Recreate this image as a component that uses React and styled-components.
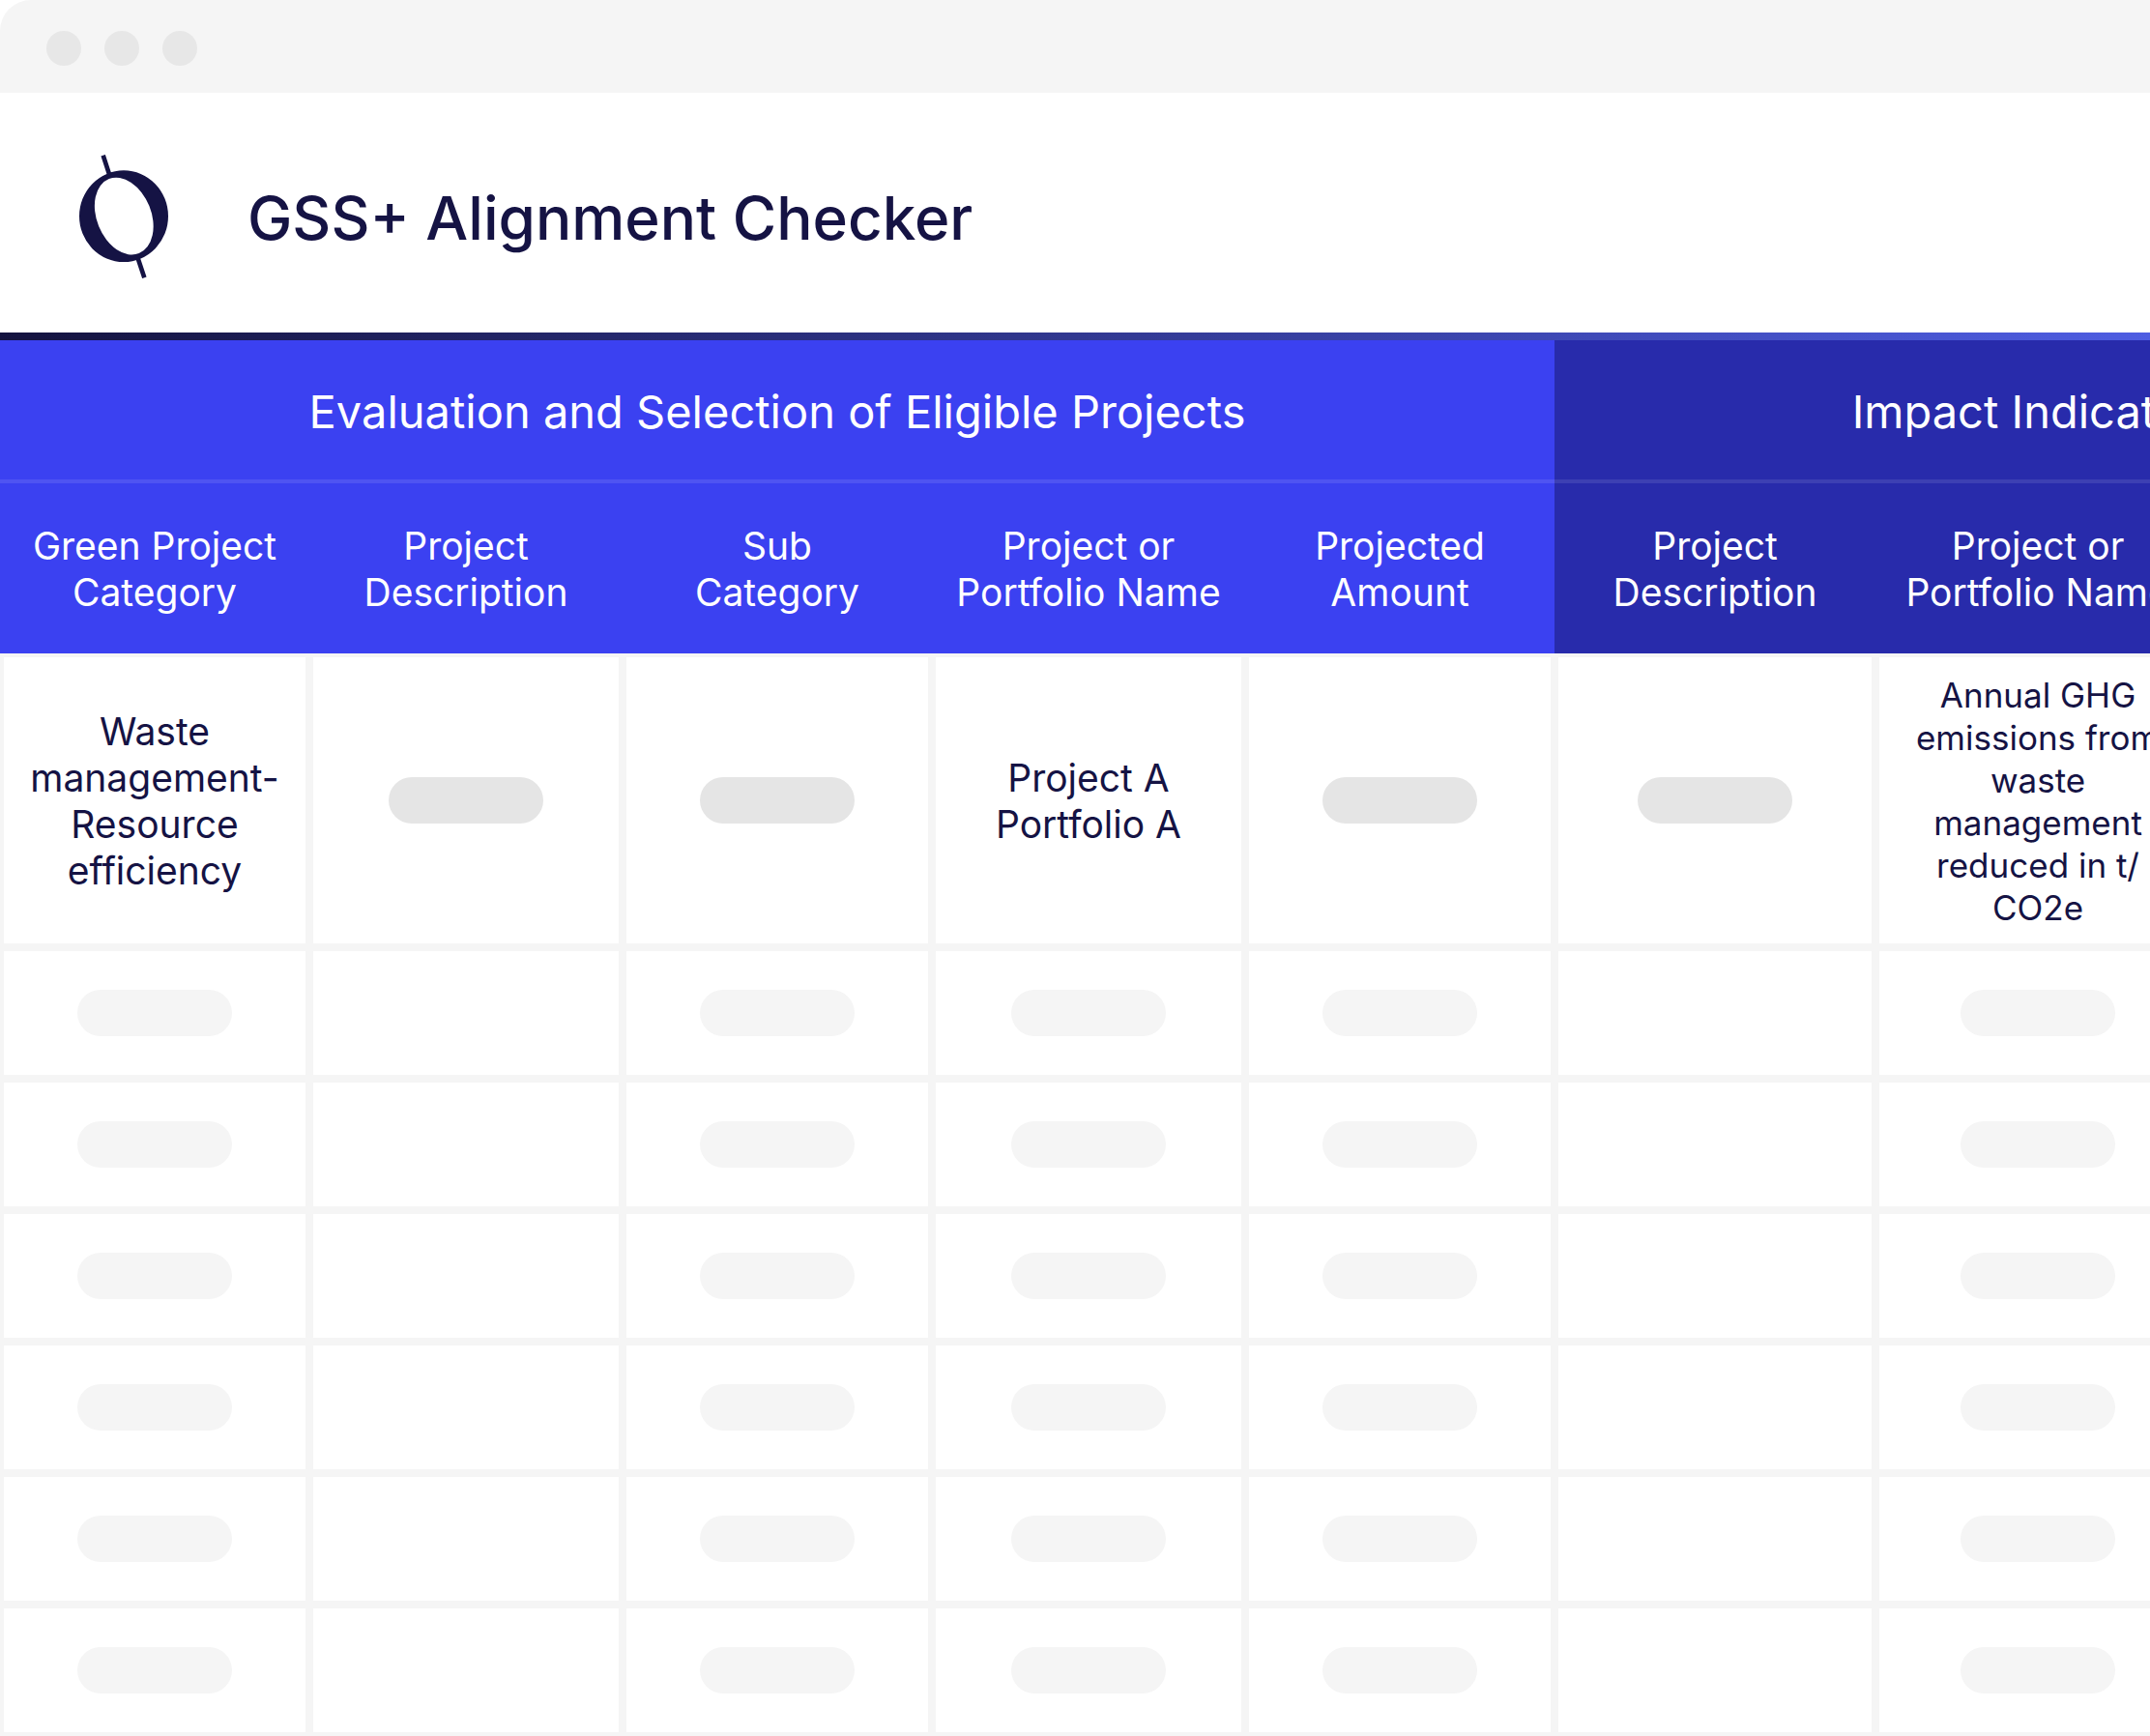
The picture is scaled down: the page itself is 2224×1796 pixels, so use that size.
import React from "react";
import styled, { createGlobalStyle } from "styled-components";

const colors = {
  ink: "#151344",
  blue: "#3b41f1",
  navy: "#282bab",
  line: "#f5f5f5",
  pill: "#e5e5e5",
  pillSoft: "#f5f5f5",
};

const GlobalStyle = createGlobalStyle`
  *, *::before, *::after { box-sizing: border-box; }
  body {
    margin: 0;
    background: #ffffff;
    color: ${colors.ink};
    font-family: Inter, "Liberation Sans", sans-serif;
  }
`;

const Window = styled.div`
  overflow: hidden;
  background: #ffffff;
  border-top-left-radius: 32px;
`;

const TitleBar = styled.div`
  display: flex;
  gap: 24px;
  padding: 32px 48px 28px;
  background: ${colors.line};
`;

const Dot = styled.span`
  width: 36px;
  height: 36px;
  border-radius: 50%;
  background: #e7e7e7;
`;

const Header = styled.header`
  display: flex;
  align-items: center;
  gap: 80px;
  padding: 64px 80px 56px;
`;

const Logo = styled.svg`
  flex: none;
  width: 96px;
  height: 128px;
`;

const Title = styled.h1`
  margin: 0;
  padding-top: 4px;
  font-size: 62px;
  font-weight: 500;
  line-height: 76px;
`;

const Rule = styled.div`
  height: 8px;
  background: linear-gradient(90deg, #14133f, #4e5de2);
`;

const Scroller = styled.div`
  overflow-x: auto;
  scrollbar-width: none;
`;

const Table = styled.table`
  width: 2608px;
  table-layout: fixed;
  border-spacing: 0;
  text-align: center;
`;

const Column = styled.col`
  width: ${(p) => p.$width}px;
`;

const GroupHead = styled.th`
  height: 148px;
  padding: 4px 0 0;
  border-bottom: 4px solid rgba(255, 255, 255, 0.1);
  background: ${(p) => p.$fill};
  color: #ffffff;
  font-size: 47px;
  font-weight: 400;
  line-height: 56px;
`;

const ColumnHead = styled.th`
  height: 176px;
  padding: 2px 0 0;
  background: ${(p) => p.$fill};
  color: #ffffff;
  font-size: 39px;
  font-weight: 400;
  line-height: 48px;
  white-space: pre-line;
`;

const Cell = styled.td`
  height: ${(p) => (p.$tall ? 304 : 136)}px;
  padding: 0;
  border: 4px solid ${colors.line};
`;

const CellText = styled.div`
  padding-top: 2px;
  font-size: ${(p) => (p.$small ? 35 : 39)}px;
  line-height: ${(p) => (p.$small ? 44 : 48)}px;
  white-space: pre-line;
`;

const Pill = styled.div`
  width: 160px;
  height: 48px;
  margin: 0 auto;
  border-radius: 24px;
  background: ${(p) => (p.$soft ? colors.pillSoft : colors.pill)};
`;

const columns = [
  { width: 320, fill: colors.blue, label: "Green Project\nCategory", text: "Waste\nmanagement-\nResource\nefficiency", filled: true },
  { width: 324, fill: colors.blue, label: "Project\nDescription", filled: false },
  { width: 320, fill: colors.blue, label: "Sub\nCategory", filled: true },
  { width: 324, fill: colors.blue, label: "Project or\nPortfolio Name", text: "Project A\nPortfolio A", filled: true },
  { width: 320, fill: colors.blue, label: "Projected\nAmount", filled: true },
  { width: 332, fill: colors.navy, label: "Project\nDescription", filled: false },
  {
    width: 336,
    fill: colors.navy,
    label: "Project or\nPortfolio Name",
    text: "Annual GHG\nemissions from\nwaste\nmanagement\nreduced in t/\nCO2e",
    small: true,
    filled: true,
  },
  { width: 332, fill: colors.navy, label: "", filled: true },
];

const placeholderRows = [1, 2, 3, 4, 5, 6];

function BrandMark() {
  return (
    <Logo viewBox="60 60 288 384" aria-hidden="true">
      <path
        fill={colors.ink}
        fillRule="evenodd"
        d="M66 251a138 142 0 1 0 276 0a138 142 0 1 0 -276 0Z M158.2 135.3a84.5 124.5 -22 1 0 93.2 230.9a84.5 124.5 -22 1 0 -93.2 -230.9Z"
      />
      <path d="M140 62L160 124M248 382L268 442" stroke={colors.ink} strokeWidth="14" />
    </Logo>
  );
}

export default function App() {
  return (
    <>
      <GlobalStyle />
      <Window>
        <TitleBar>
          <Dot />
          <Dot />
          <Dot />
        </TitleBar>
        <Header>
          <BrandMark />
          <Title>GSS+ Alignment Checker</Title>
        </Header>
        <Rule />
        <Scroller>
          <Table>
            <colgroup>
              {columns.map((c, i) => (
                <Column key={i} $width={c.width} />
              ))}
            </colgroup>
            <thead>
              <tr>
                <GroupHead colSpan={5} scope="colgroup" $fill={colors.blue}>
                  Evaluation and Selection of Eligible Projects
                </GroupHead>
                <GroupHead colSpan={3} scope="colgroup" $fill={colors.navy}>
                  Impact Indicators
                </GroupHead>
              </tr>
              <tr>
                {columns.map((c, i) => (
                  <ColumnHead key={i} scope="col" $fill={c.fill}>
                    {c.label}
                  </ColumnHead>
                ))}
              </tr>
            </thead>
            <tbody>
              <tr>
                {columns.map((c, i) => (
                  <Cell key={i} $tall>
                    {c.text ? <CellText $small={c.small}>{c.text}</CellText> : <Pill />}
                  </Cell>
                ))}
              </tr>
              {placeholderRows.map((row) => (
                <tr key={row}>
                  {columns.map((c, i) => (
                    <Cell key={i}>{c.filled && <Pill $soft />}</Cell>
                  ))}
                </tr>
              ))}
            </tbody>
          </Table>
        </Scroller>
      </Window>
    </>
  );
}
